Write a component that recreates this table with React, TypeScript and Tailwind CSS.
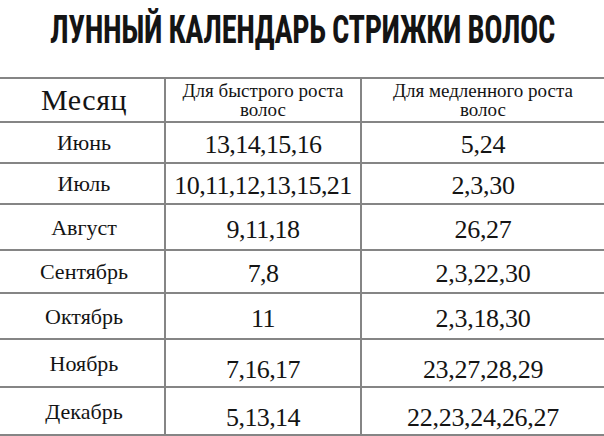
import React from 'react'

const rows = [
  { month: 'Июнь', fast: '13,14,15,16', slow: '5,24', h: 'h-[41px]', np: 'pt-1' },
  { month: 'Июль', fast: '10,11,12,13,15,21', slow: '2,3,30', h: 'h-[41px]', np: 'pt-1' },
  { month: 'Август', fast: '9,11,18', slow: '26,27', h: 'h-[46px]', np: 'pt-1' },
  { month: 'Сентябрь', fast: '7,8', slow: '2,3,22,30', h: 'h-[43px]', np: 'pt-1' },
  { month: 'Октябрь', fast: '11', slow: '2,3,18,30', h: 'h-[46px]', np: 'pt-1' },
  { month: 'Ноябрь', fast: '7,16,17', slow: '23,27,28,29', h: 'h-[48px]', np: 'pt-3' },
  { month: 'Декабрь', fast: '5,13,14', slow: '22,23,24,26,27', h: 'h-[48px]', np: 'pt-3' },
]

const serif = "font-['Liberation_Serif','DejaVu_Serif',serif]"

export default function App() {
  return (
    <div className="w-[604px] h-[436px] bg-white overflow-hidden text-[#141414]">
      {/* Title */}
      <div className="h-[77px] pt-[7px] flex justify-center">
        <h1 className="shrink-0 scale-x-[0.8] font-['Roboto_Condensed','Liberation_Sans_Narrow','DejaVu_Sans_Condensed','Liberation_Sans',sans-serif] font-bold text-[38px] leading-[46px] tracking-[-0.5px] whitespace-nowrap">
          ЛУННЫЙ КАЛЕНДАРЬ СТРИЖКИ ВОЛОС
        </h1>
      </div>

      {/* Table */}
      <div className={`grid grid-cols-[166px_196px_1fr] border-t-2 border-[#858585] ${serif}`}>
        <div className="h-[44px] border-b-2 border-r-2 border-[#858585] flex items-center justify-center text-[30px] tracking-[0.5px] leading-none pl-1">
          Месяц
        </div>
        <div className="h-[44px] border-b-2 border-r-2 border-[#858585] flex items-center justify-center text-center text-[19px] leading-[19px]">
          Для быстрого роста
          <br />
          волос
        </div>
        <div className="h-[44px] border-b-2 border-[#858585] flex items-center justify-center text-center text-[19px] leading-[19px]">
          Для медленного роста
          <br />
          волос
        </div>

        {rows.map((r) => (
          <React.Fragment key={r.month}>
            <div className={`${r.h} border-b-2 border-r-2 border-[#858585] flex items-center justify-center text-[22px] pl-1`}>
              {r.month}
            </div>
            <div className={`${r.h} ${r.np} border-b-2 border-r-2 border-[#858585] flex items-center justify-center text-[26px] tracking-[-0.6px]`}>
              {r.fast}
            </div>
            <div className={`${r.h} ${r.np} border-b-2 border-[#858585] flex items-center justify-center text-[26px] tracking-[-0.3px]`}>
              {r.slow}
            </div>
          </React.Fragment>
        ))}
      </div>
    </div>
  )
}
